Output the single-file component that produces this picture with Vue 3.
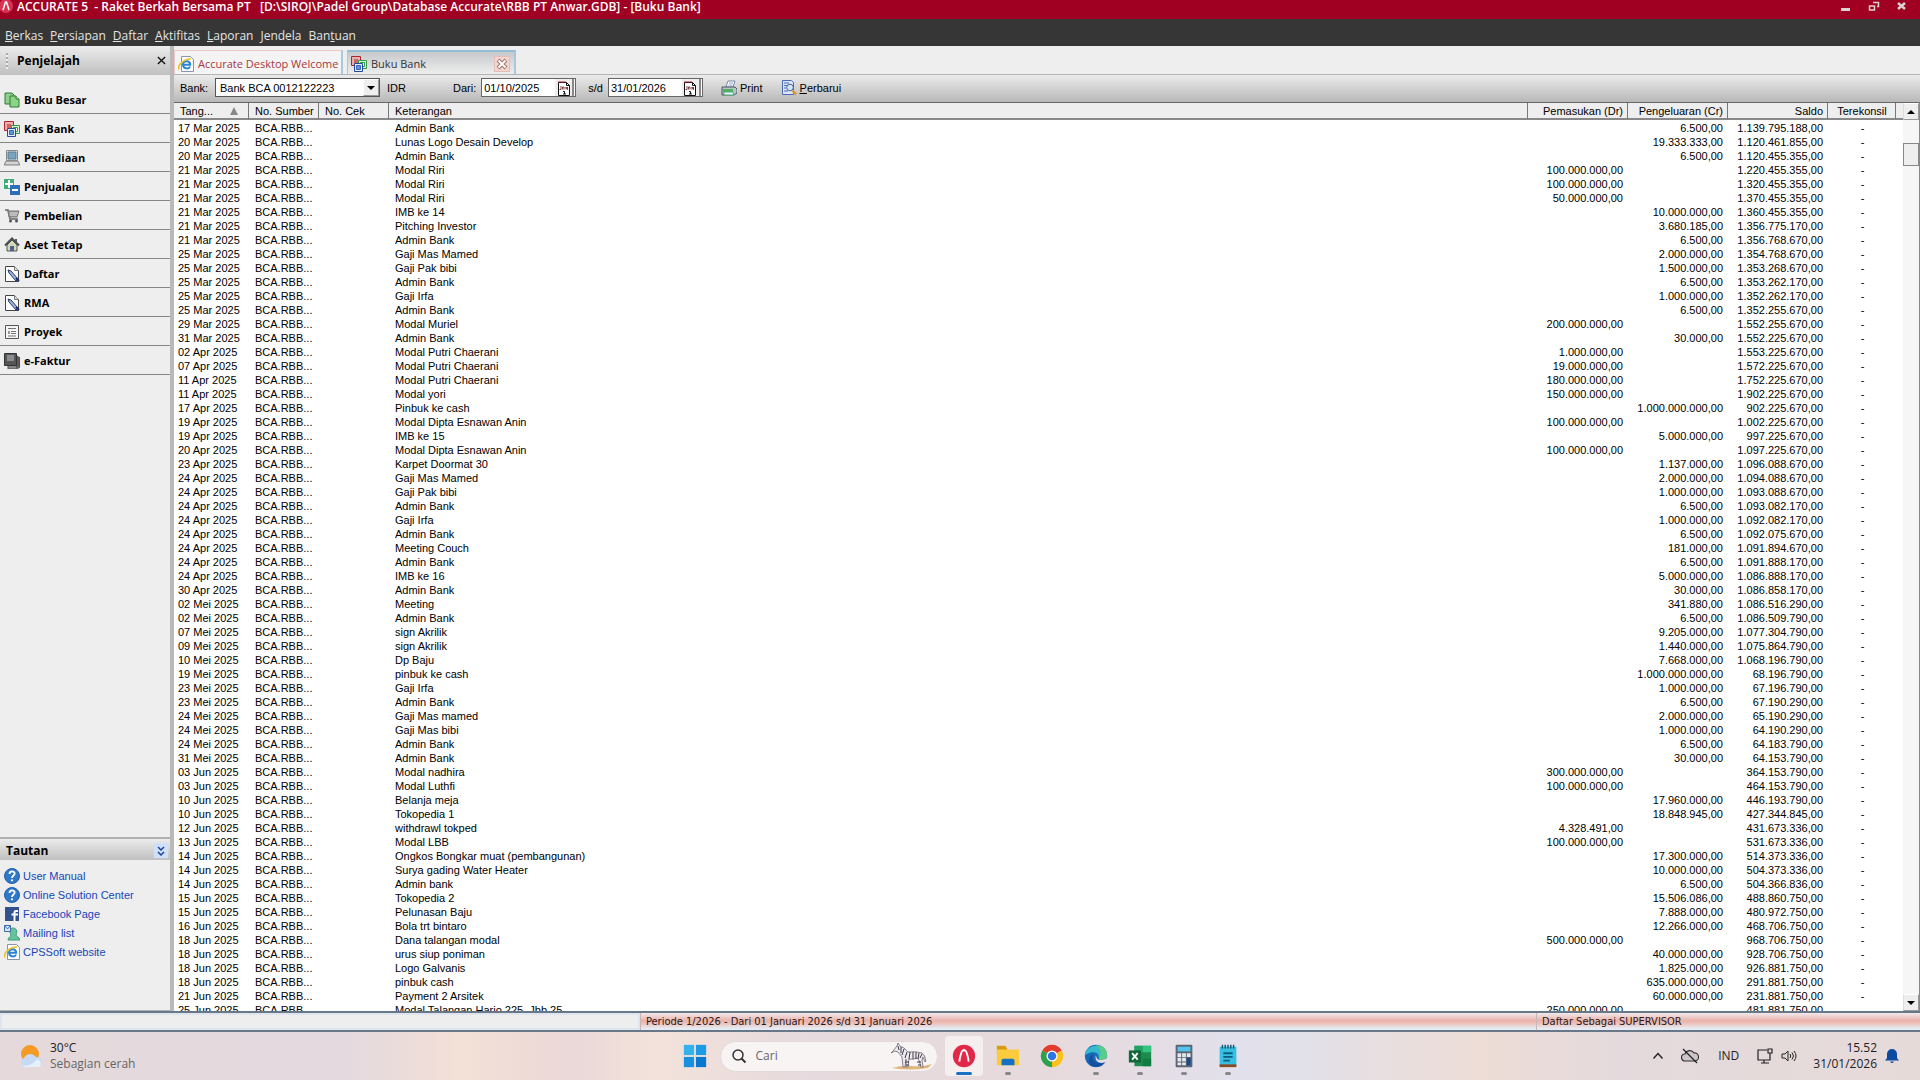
<script setup>
const menus = [
  ['', 'B', 'erkas'], ['', 'P', 'ersiapan'], ['', 'D', 'aftar'], ['', 'A', 'ktifitas'],
  ['', 'L', 'aporan'], ['', 'J', 'endela'], ['Ban', 't', 'uan'],
]

const icons = {
  copy: '<path d="M1 1h7l2 2v9H1z" fill="#8fcf8b" stroke="#2f7a35"/><path d="M6 4h6l3 3v8H6z" fill="#8bd488" stroke="#2f7a35"/><path d="M12 4v3h3" fill="#d9f2d6" stroke="#2f7a35"/>',
  bank: '<path d="M.5.5h9v9h-9z" fill="#e8b0ae" stroke="#a8292d"/><path d="M3 3h4v4H3z" fill="#c96666"/><path d="M7.500 4.500h8v8h-8z" fill="#d9f2d9" stroke="#2f9a44"/><path d="M9.500 6.500h4v4h-4z" fill="#fff" stroke="#2f9a44"/><path d="M3.500 7.500h8v8h-8z" fill="#e3efff" stroke="#27489a"/><path d="M5.500 9.500h4v4h-4z" fill="#5d95df" stroke="#3767b5"/>',
  computer: '<path d="M2.500.5h11v10h-11z" fill="#e4e6e8" stroke="#888"/><path d="M4 2h8v7H4z" fill="#7ba3bd" stroke="#557c94"/><path d="M2 11h12l2 4H0z" fill="#b9bcbf" stroke="#888"/><path d="M2 13h12" stroke="#eee"/>',
  plusminus: '<path d="M0 0h10v10H0z" fill="#3fae74"/><path d="M5 1v8M1 5h8" stroke="#fff" stroke-width="2"/><path d="M6 6h10v10H6z" fill="#2f6fba"/><path d="M8 11h6" stroke="#fff" stroke-width="2"/>',
  cart: '<path d="M1 2h3l2 9h8" fill="none" stroke="#666" stroke-width="1.500"/><path d="M4 3h11l-2 6H5z" fill="#9a9a9a" stroke="#777"/><path d="M6 5h8M6 7h7" stroke="#ddd"/><circle cx="6.500" cy="13" r="1.500" fill="#555"/><circle cx="12.500" cy="13" r="1.500" fill="#555"/>',
  house: '<path d="M3 8v6h10V8L8 3z" fill="#d3d8b8" stroke="#555"/><path d="M1 8.500 8 1.500l7 7" fill="none" stroke="#4a4f55" stroke-width="2"/><path d="M12 2v3" stroke="#555" stroke-width="2"/><path d="M6 9h4v5H6z" fill="#4d6487"/>',
  note: '<path d="M1.500.5h9l4 4v11h-13z" fill="#fff" stroke="#444"/><path d="M10.500.5v4h4" fill="#ddd" stroke="#777"/><path d="m4 4 3 1 7 8-2 2-7-8z" fill="#9cb1d8" stroke="#27386e"/><path d="m12 12 3 3" stroke="#1e2f68" stroke-width="2"/>',
  project: '<path d="M1.500 1.500h13v13h-13z" fill="#f5f5f5" stroke="#555"/><path d="M4 4.500h8M7 7.500h5M7 9.500h5M4 12h8" stroke="#777"/><path d="M4 7h2v3H4z" fill="#999"/>',
  device: '<path d="M4 3h9l3 2v9l-3 2H4z" fill="#888" stroke="#555"/><path d="M.5.500h12v12H.5z" fill="#555" stroke="#333"/><path d="M3 2h7v6H3z" fill="#8a8e92"/><path d="M13 3v12M15 4v10" stroke="#333"/>',
  help: '<circle cx="8" cy="8" r="7.500" fill="#2f78c8" stroke="#2260a8"/><path d="M5.500 6c0-3.500 5.200-3.200 5.200-.4C10.700 7.500 8 7.500 8 10" fill="none" stroke="#fff" stroke-width="1.800"/><circle cx="8" cy="12.300" r="1.100" fill="#fff"/>',
  facebook: '<path d="M1 1h14v14H1z" fill="#34518f"/><path d="M14 5h-2q-1.500 0-1.500 1.500V15M7.500 8.500H14" fill="none" stroke="#fff" stroke-width="2"/>',
  mailing: '<path d="M4 15c0-3 3-3 3-5-2-4-1-7 2-7s5 3 3 7c0 2 4 2 4 5z" fill="#67c39c" stroke="#3c9a78"/><path d="M.5.500h6v6h-6z" fill="#dbe8fb" stroke="#3d6aa8"/><path d="m1 1 2.500 3L6 1" fill="none" stroke="#3d6aa8"/>',
  ie: '<path d="M3.500.5h9l3 3v12h-12z" fill="#fff" stroke="#8a94a8"/><path d="M12 10.500c-1 3-7 2.500-7-2s7-4.500 7.200.3H5.500" fill="none" stroke="#2a84d6" stroke-width="2"/><path d="M1 13.500C-1 9 6 2.500 13 3" fill="none" stroke="#e8c22c" stroke-width="1.500"/>',
  print: '<path d="M5 7 7 1h7l-2 6z" fill="#fff" stroke="#7a8aa5"/><path d="M8 3h4M7.500 5h4" stroke="#8aa6d8"/><path d="M1 7h13l2 2v4l-3 2H1z" fill="#b9c3c9" stroke="#4b5a66"/><path d="M2 9h10v3H2z" fill="#51b05a"/><path d="M3 12h9l1 3H3z" fill="#e8f4ff" stroke="#5a7"/>',
  refresh: '<path d="M1.500.5h9l2 2v12h-11z" fill="#dbe6fa" stroke="#4a6bb5"/><path d="M3 3h5M3 5.500h3M3 8h2M3 11h4" stroke="#4a6bb5"/><circle cx="9" cy="7.500" r="3.300" fill="#cfe6fb" stroke="#51658e"/><path d="m11.500 10.500 3.500 4" stroke="#d9962c" stroke-width="2.500"/>',
  calendar: '<path d="M2.500 15.500v-13h8l3 3v10z" fill="#fff" stroke="#111"/><path d="M2 2h8" stroke="#a02030"/><path d="M10.500 2.500v3h3" fill="none" stroke="#111"/><path d="M5 6v3.500H3.500M6.500 9.500V7h1.500v2.500M10 9.500V7l1.500 2.500V7" fill="none" stroke="#611" stroke-width=".8"/><path d="M7 11.500h1.500V14M7 14h3" fill="none" stroke="#111"/>',
}

const nav = [
  ['copy', 'Buku Besar'], ['bank', 'Kas Bank'], ['computer', 'Persediaan'], ['plusminus', 'Penjualan'],
  ['cart', 'Pembelian'], ['house', 'Aset Tetap'], ['note', 'Daftar'], ['note', 'RMA'],
  ['project', 'Proyek'], ['device', 'e-Faktur'],
]

const links = [
  ['help', 'User Manual'], ['help', 'Online Solution Center'], ['facebook', 'Facebook Page'],
  ['mailing', 'Mailing list'], ['ie', 'CPSSoft website'],
]

// tanggal | keterangan | pemasukan | pengeluaran | saldo
const rows = `17 Mar|Admin Bank||6.500|1.139.795.188
20 Mar|Lunas Logo Desain Develop||19.333.333|1.120.461.855
20 Mar|Admin Bank||6.500|1.120.455.355
21 Mar|Modal Riri|100.000.000||1.220.455.355
21 Mar|Modal Riri|100.000.000||1.320.455.355
21 Mar|Modal Riri|50.000.000||1.370.455.355
21 Mar|IMB ke 14||10.000.000|1.360.455.355
21 Mar|Pitching Investor||3.680.185|1.356.775.170
21 Mar|Admin Bank||6.500|1.356.768.670
25 Mar|Gaji Mas Mamed||2.000.000|1.354.768.670
25 Mar|Gaji Pak bibi||1.500.000|1.353.268.670
25 Mar|Admin Bank||6.500|1.353.262.170
25 Mar|Gaji Irfa||1.000.000|1.352.262.170
25 Mar|Admin Bank||6.500|1.352.255.670
29 Mar|Modal Muriel|200.000.000||1.552.255.670
31 Mar|Admin Bank||30.000|1.552.225.670
02 Apr|Modal Putri Chaerani|1.000.000||1.553.225.670
07 Apr|Modal Putri Chaerani|19.000.000||1.572.225.670
11 Apr|Modal Putri Chaerani|180.000.000||1.752.225.670
11 Apr|Modal yori|150.000.000||1.902.225.670
17 Apr|Pinbuk ke cash||1.000.000.000|902.225.670
19 Apr|Modal Dipta Esnawan Anin|100.000.000||1.002.225.670
19 Apr|IMB ke 15||5.000.000|997.225.670
20 Apr|Modal Dipta Esnawan Anin|100.000.000||1.097.225.670
23 Apr|Karpet Doormat 30||1.137.000|1.096.088.670
24 Apr|Gaji Mas Mamed||2.000.000|1.094.088.670
24 Apr|Gaji Pak bibi||1.000.000|1.093.088.670
24 Apr|Admin Bank||6.500|1.093.082.170
24 Apr|Gaji Irfa||1.000.000|1.092.082.170
24 Apr|Admin Bank||6.500|1.092.075.670
24 Apr|Meeting Couch||181.000|1.091.894.670
24 Apr|Admin Bank||6.500|1.091.888.170
24 Apr|IMB ke 16||5.000.000|1.086.888.170
30 Apr|Admin Bank||30.000|1.086.858.170
02 Mei|Meeting||341.880|1.086.516.290
02 Mei|Admin Bank||6.500|1.086.509.790
07 Mei|sign Akrilik||9.205.000|1.077.304.790
09 Mei|sign Akrilik||1.440.000|1.075.864.790
10 Mei|Dp Baju||7.668.000|1.068.196.790
19 Mei|pinbuk ke cash||1.000.000.000|68.196.790
23 Mei|Gaji Irfa||1.000.000|67.196.790
23 Mei|Admin Bank||6.500|67.190.290
24 Mei|Gaji Mas mamed||2.000.000|65.190.290
24 Mei|Gaji Mas bibi||1.000.000|64.190.290
24 Mei|Admin Bank||6.500|64.183.790
31 Mei|Admin Bank||30.000|64.153.790
03 Jun|Modal nadhira|300.000.000||364.153.790
03 Jun|Modal Luthfi|100.000.000||464.153.790
10 Jun|Belanja meja||17.960.000|446.193.790
10 Jun|Tokopedia 1||18.848.945|427.344.845
12 Jun|withdrawl tokped|4.328.491||431.673.336
13 Jun|Modal LBB|100.000.000||531.673.336
14 Jun|Ongkos Bongkar muat (pembangunan)||17.300.000|514.373.336
14 Jun|Surya gading Water Heater||10.000.000|504.373.336
14 Jun|Admin bank||6.500|504.366.836
15 Jun|Tokopedia 2||15.506.086|488.860.750
15 Jun|Pelunasan Baju||7.888.000|480.972.750
16 Jun|Bola trt bintaro||12.266.000|468.706.750
18 Jun|Dana talangan modal|500.000.000||968.706.750
18 Jun|urus siup poniman||40.000.000|928.706.750
18 Jun|Logo Galvanis||1.825.000|926.881.750
18 Jun|pinbuk cash||635.000.000|291.881.750
21 Jun|Payment 2 Arsitek||60.000.000|231.881.750
25 Jun|Modal Talangan Hario 225, Jbb 25|250.000.000||481.881.750`
  .split('\n')
  .map((line) => line.split('|'))

const money = (value) => (value ? value + ',00' : '')

const apps = [
  { name: 'Accurate', active: true, art: '<circle cx="14" cy="14" r="12" fill="#e22849"/><path d="M9 20c.5-5 2.500-12 4-12h2c1.500 0 3.500 7 4 12" fill="none" stroke="#fff" stroke-width="2"/><path d="m12 9 2-3 2 3z" fill="#fff"/>' },
  { name: 'File Explorer', open: true, art: '<path d="M2 3h9l2 3v4H2z" fill="#d99a12"/><path d="M2 7h24v17H2z" fill="#fbcb3e"/><path d="M7 24v-5q0-2 2-2h10q2 0 2 2v5z" fill="#1470c4"/>' },
  { name: 'Chrome', art: '<path d="M14 14 3.600 8A12 12 0 0 1 24.400 8z" fill="#e33b2e"/><path d="M14 14V2 14L24.400 8A12 12 0 0 1 14 26z" fill="#fbc116"/><path d="M14 14v12A12 12 0 0 1 3.600 8z" fill="#2ca24c"/><circle cx="14" cy="14" r="6" fill="#fff"/><circle cx="14" cy="14" r="4.600" fill="#2f74e4"/>' },
  { name: 'Edge', open: true, art: '<circle cx="14" cy="14" r="12" fill="#1769b8"/><path d="M2 14C3-1 26-1 26 13c0 6-9 7-9 3 0-3-1-6-6-6-4 0-8 2-9 4z" fill="#35b9cf"/><path d="M14 2.500c8 0 12 5 12 10.500 0 6-9 7-9 3 4-3 2-10-3-13.500z" fill="#5bcb85"/><path d="M11 12c-3 6 3 12 12 9-4 6-13 6-16 1-2-4 0-8 4-10z" fill="#174f9c"/><path d="M14 13c0 5 4 7 11 4l1-2v5l-3 1c-7 2-11-3-9-8z" fill="#eadde2"/>' },
  { name: 'Excel', open: true, art: '<path d="M8 3h18v22H8z" fill="#1e8a4e"/><path d="M8 3h9v7H8z" fill="#21a366"/><path d="M17 3h9v7h-9z" fill="#33c481"/><path d="M17 17h9v8h-9z" fill="#107c41"/><path d="M2 8h13v13H2z" fill="#106837"/><path d="m5.500 11 6 7M11.500 11l-6 7" stroke="#fff" stroke-width="2"/>' },
  { name: 'Kalkulator', open: true, art: '<rect x="5" y="2" width="18" height="24" rx="1" fill="#5b6573"/><path d="M7 4h14v5H7z" fill="#52c4ee"/><path d="M7 11h4v4H7zm5 0h4v4h-4zm5 0h4v4h-4zM7 16h4v4H7zm5 0h4v4h-4zM7 21h4v3H7zm5 0h4v3h-4z" fill="#e6e9ee"/><path d="M17 16h4v8h-4z" fill="#174a8c"/>' },
  { name: 'Notepad', open: true, art: '<path d="M5 4h18v21H5z" fill="#35bfe0"/><path d="M5 23h18v3H5z" fill="#8a4a22"/><path d="M8 2v4m3-4v4m3-4v4m3-4v4m3-4v4" stroke="#144f70" stroke-width="1.500"/><path d="M9 11h10M9 15h10M9 19h7" stroke="#0e5c80" stroke-width="2"/>' },
]
</script>

<template>
  <div class="desktop">
    <header class="titlebar">
      <svg class="ico" viewBox="0 0 16 16"><circle cx="6" cy="7" r="7" fill="#d93354" /><path d="m3 11 2.500-8h1L9 11" fill="none" stroke="#fff" stroke-width="1.500" /></svg>
      <h1>ACCURATE 5&nbsp; - Raket Berkah Bersama PT&nbsp;&nbsp; [D:\SIROJ\Padel Group\Database Accurate\RBB PT Anwar.GDB] - [Buku Bank]</h1>
      <div class="window-buttons">
        <button aria-label="Minimize"><svg viewBox="0 0 12 12"><path d="M1 7h9v3H1z" fill="#d9d3cf" /></svg></button>
        <button aria-label="Restore"><svg viewBox="0 0 12 12"><path d="M5 1.500h5.500v4H9M1.500 5h5v4h-5z" fill="none" stroke="#d9d3cf" stroke-width="1.500" /></svg></button>
        <button aria-label="Close"><svg viewBox="0 0 12 12"><path d="m2 2 7 6M9 2 2 8" stroke="#d9d3cf" stroke-width="2.500" /></svg></button>
      </div>
    </header>

    <nav class="menubar">
      <a v-for="m in menus" :key="m[2]" href="#">{{ m[0] }}<u>{{ m[1] }}</u>{{ m[2] }}</a>
    </nav>

    <div class="body">
      <aside class="sidebar">
        <div class="panel-head explorer">
          <span class="grip"></span>
          <h2>Penjelajah</h2>
          <button aria-label="Tutup panel"><svg viewBox="0 0 10 10"><path d="m1 1 8 8M9 1 1 9" stroke="#111" stroke-width="1.500" /></svg></button>
        </div>
        <ul class="modules">
          <li v-for="item in nav" :key="item[1]">
            <a href="#"><svg class="ico" viewBox="0 0 16 16" v-html="icons[item[0]]"></svg>{{ item[1] }}</a>
          </li>
        </ul>
        <div class="panel-head links-head">
          <h2>Tautan</h2>
          <button class="collapse" aria-label="Ciutkan"><svg viewBox="0 0 14 14"><path d="m4 3 3 3 3-3M4 8l3 3 3-3" fill="none" stroke="#1c3f94" stroke-width="1.500" /></svg></button>
        </div>
        <ul class="links">
          <li v-for="link in links" :key="link[1]">
            <a href="#"><svg class="ico" viewBox="0 0 16 16" v-html="icons[link[0]]"></svg>{{ link[1] }}</a>
          </li>
        </ul>
      </aside>

      <main class="workspace">
        <div class="tabs">
          <button class="tab"><svg class="ico" viewBox="0 0 16 16" v-html="icons.ie"></svg>Accurate Desktop Welcome</button>
          <div class="tab current">
            <svg class="ico" viewBox="0 0 16 16" v-html="icons.bank"></svg><span>Buku Bank</span>
            <button class="tab-close" aria-label="Tutup tab"><svg viewBox="0 0 12 12"><path d="m2 2 8 8M10 2l-8 8" stroke="#a3736c" stroke-width="4" /><path d="m2.500 2.500 7 7M9.500 2.500l-7 7" stroke="#fff" stroke-width="2" /></svg></button>
          </div>
        </div>

        <div class="toolbar">
          <label for="bank">Bank:</label>
          <div class="combo">
            <select id="bank"><option>Bank BCA 0012122223</option></select>
            <span class="drop"></span>
          </div>
          <span class="currency">IDR</span>
          <label for="from">Dari:</label>
          <div class="date">
            <input id="from" type="text" value="01/10/2025" />
            <button aria-label="Kalender"><svg class="ico" viewBox="0 0 16 16" v-html="icons.calendar"></svg></button>
          </div>
          <label for="to" class="until">s/d</label>
          <div class="date">
            <input id="to" type="text" value="31/01/2026" />
            <button aria-label="Kalender"><svg class="ico" viewBox="0 0 16 16" v-html="icons.calendar"></svg></button>
          </div>
          <button class="tool"><svg class="ico" viewBox="0 0 16 16" v-html="icons.print"></svg>Print</button>
          <button class="tool"><svg class="ico" viewBox="0 0 16 16" v-html="icons.refresh"></svg><span><u>P</u>erbarui</span></button>
        </div>

        <div class="grid">
          <div class="viewport">
            <table>
              <colgroup>
                <col class="c-date" /><col class="c-code" /><col class="c-code" /><col />
                <col class="c-num" /><col class="c-num" /><col class="c-num" /><col class="c-rec" /><col class="c-end" />
              </colgroup>
              <thead>
                <tr>
                  <th><div class="sorted">Tang...<svg viewBox="0 0 8 8"><path d="M4 0 8 8H0z" fill="#888" /></svg></div></th>
                  <th>No. Sumber</th>
                  <th>No. Cek</th>
                  <th>Keterangan</th>
                  <th class="num">Pemasukan (Dr)</th>
                  <th class="num">Pengeluaran (Cr)</th>
                  <th class="num">Saldo</th>
                  <th class="mid">Terekonsil</th>
                  <th></th>
                </tr>
              </thead>
              <tbody>
                <tr v-for="(r, i) in rows" :key="i">
                  <td class="day">{{ r[0] }} 2025</td>
                  <td>BCA.RBB...</td>
                  <td></td>
                  <td>{{ r[1] }}</td>
                  <td class="num">{{ money(r[2]) }}</td>
                  <td class="num">{{ money(r[3]) }}</td>
                  <td class="num">{{ money(r[4]) }}</td>
                  <td class="mid">-</td>
                  <td></td>
                </tr>
              </tbody>
            </table>
          </div>
          <div class="scrollbar">
            <button aria-label="Gulir ke atas"><svg viewBox="0 0 8 4"><path d="M4 0 8 4H0z" /></svg></button>
            <div class="track"><div class="thumb"></div></div>
            <button aria-label="Gulir ke bawah"><svg viewBox="0 0 8 4"><path d="M0 0h8L4 4z" /></svg></button>
          </div>
        </div>
      </main>
    </div>

    <footer class="status">
      <div class="blank"></div>
      <div class="pink period">Periode 1/2026 - Dari 01 Januari 2026 s/d 31 Januari 2026</div>
      <div class="pink user">Daftar Sebagai SUPERVISOR</div>
    </footer>

    <div class="taskbar">
      <div class="weather">
        <svg viewBox="0 0 26 26"><circle cx="12" cy="11" r="9" fill="#f59a23" /><path d="M6 24a5 5 0 0 1 0-9 7 7 0 0 1 12-1 5 5 0 0 1 2 10z" fill="#c6daf6" /><path d="M4 22c5 2 12-1 15-6 5 1 5 8 1 8H6z" fill="#e6effc" /></svg>
        <div><p>30°C</p><p class="dim">Sebagian cerah</p></div>
      </div>
      <div class="center">
        <button class="app" aria-label="Start"><svg viewBox="0 0 28 28"><path d="M2 2h11v11H2z" fill="#33b2ee" /><path d="M15 2h11v11H15z" fill="#1c9ce6" /><path d="M2 15h11v11H2z" fill="#1790e0" /><path d="M15 15h11v11H15z" fill="#0877d0" /></svg></button>
        <div class="search">
          <svg class="lens" viewBox="0 0 16 16"><circle cx="7" cy="7" r="5" fill="none" stroke="#333" stroke-width="1.500" /><path d="m10.500 10.500 4 4" stroke="#333" stroke-width="2" /></svg>
          <input type="text" placeholder="Cari" aria-label="Cari" />
          <svg class="zebra" viewBox="0 0 42 28">
            <path d="M2 26q10-3 20-2t20-2l-4 4q-18 3-36 0z" fill="#dfb77d" />
            <path d="M3 9 7 4l1-3 2 3 4 2 4 4q8-1 14 1 3 2 4 8l-1 1-2-5-1 3 1 7h-2l-2-7-2-2q-4 2-8 1l-1 8h-2v-8l-1 8h-2l-1-10-4-5-3-1-4 2z" fill="#eceaf0" stroke="#6b6772" stroke-width=".8" />
            <path d="m8 4 1 4M11 5v6M14 7l-2 6M17 10l-2 6M20 10l-1 7M23 10v7M26 10v7M29 11l-1 6M32 12l-2 4M15 20h4M27 20h4M16 23h3M28 23h3" stroke="#3c3943" />
          </svg>
        </div>
        <button v-for="app in apps" :key="app.name" class="app" :class="{ active: app.active, open: app.open }" :aria-label="app.name">
          <svg viewBox="0 0 28 28" v-html="app.art"></svg>
        </button>
      </div>
      <div class="tray">
        <svg viewBox="0 0 16 16"><path d="m3.500 10.500 4.500-5 4.500 5" fill="none" stroke="#222" stroke-width="1.400" /></svg>
        <svg class="cloud" viewBox="0 0 18 16"><path d="M4 13a3.500 3.500 0 0 1 0-7 5 5 0 0 1 9-1 4 4 0 0 1 1 8z" fill="#ccc6ca" stroke="#333" stroke-width="1.200" /><path d="m2 1 14 14" stroke="#222" stroke-width="1.300" /></svg>
        <span class="lang">IND</span>
        <svg class="net" viewBox="0 0 16 16"><path d="M10 2H1v10h12V8M7 12v3M4 15h8M11 1h4v4h-4zM13 5v3" fill="none" stroke="#222" stroke-width="1.200" /></svg>
        <svg class="sound" viewBox="0 0 16 16"><path d="M1 6h3l3-3v10l-3-3H1zM9 6q1.500 2 0 4M11 4.500q3 3.500 0 7M13 3q4 5 0 10" fill="none" stroke="#222" /></svg>
        <div class="clock"><p>15.52</p><p>31/01/2026</p></div>
        <svg class="bell" viewBox="0 0 16 16"><path d="M1 12.500 3 10V6a5 5 0 0 1 10 0v4l2 2.500zM6 13.500h4q-2 3-4 0z" fill="#0b4aa0" /></svg>
      </div>
    </div>
  </div>
</template>

<style>
html, body { margin: 0; }
</style>

<style scoped>
.desktop {
  --ui: "Open Sans", "Noto Sans", sans-serif;
  --small: "Liberation Sans", Arial, sans-serif;
  height: 100vh;
  display: flex;
  flex-direction: column;
  overflow: hidden;
  background: #eee;
  font: 11px/14px var(--small);
  color: #000;
}
.desktop * { box-sizing: border-box; }
button { border: 0; padding: 0; background: none; font: inherit; color: inherit; display: flex; align-items: center; justify-content: center; }
a { color: inherit; text-decoration: none; }
h1, h2, p, ul { margin: 0; padding: 0; list-style: none; }
svg { display: block; flex: none; }
.ico { width: 16px; height: 16px; }

.titlebar { height: 19px; flex: none; display: flex; align-items: center; padding: 0 12px 5px 0; background: #a00022; color: #fff; }
.titlebar .ico { margin-right: 1px; }
.titlebar h1 { flex: 1; font: 600 12px/14px var(--ui); white-space: nowrap; }
.window-buttons { display: flex; gap: 16px; }
.window-buttons svg { width: 12px; height: 12px; }

.menubar { height: 27px; flex: none; display: flex; align-items: center; gap: 7px; padding: 6px 0 0 5px; background: #363636; color: #e4e4e4; font: 12px/16px var(--ui); }

.body { flex: 1; min-height: 0; display: flex; }
.sidebar { width: 174px; flex: none; display: flex; flex-direction: column; border-right: 4px solid #b9b9b9; background: #eee; }
.panel-head { display: flex; align-items: center; background: linear-gradient(#ececec, #c0c0c0); }
.panel-head h2 { flex: 1; font: bold 12px/16px var(--ui); }
.explorer { height: 29px; padding: 0 4px 0 6px; }
.explorer svg { width: 9px; height: 9px; }
.grip { width: 2px; height: 16px; margin-right: 9px; background: repeating-linear-gradient(#aaa 0 2px, #eee 2px 4px); }
.modules { flex: 1; padding-top: 10px; }
.modules a { height: 29px; display: flex; align-items: center; gap: 4px; padding: 2px 0 0 4px; border-bottom: 1px solid #858585; font: bold 11px/16px var(--ui); }
.links-head { height: 23px; padding: 2px 2px 0 6px; border-top: 2px solid #b0b0b0; }
.collapse { width: 14px; height: 15px; background: #cfe0fa; }
.collapse svg { width: 14px; height: 14px; }
.links { height: 151px; padding-top: 6px; border-bottom: 1px solid #b0b0b0; color: #1746b8; }
.links a { height: 19px; display: flex; align-items: center; gap: 3px; padding-left: 4px; }

.workspace { flex: 1; min-width: 0; display: flex; flex-direction: column; }
.tabs { height: 29px; flex: none; display: flex; align-items: flex-end; gap: 4px; border-bottom: 1px solid #b4b4b4; background: #eee; }
.tab { width: 169px; height: 24px; display: flex; align-items: center; justify-content: flex-start; gap: 4px; padding: 2px 4px 0 3px; border: 1px solid #efc6c3; border-right: 2px solid #a5cbe0; border-bottom: 0; background: #f4f4f4; color: #a5393f; font: 11px/16px var(--ui); white-space: nowrap; }
.tab.current { border: 1px solid #a5c8dc; border-top: 2px solid #93bed6; border-right-width: 2px; border-bottom: 0; background: linear-gradient(#c6c8ca, #eee); color: #333; }
.tab.current span { flex: 1; }
.tab-close { width: 16px; height: 16px; border: 1px solid #e3bdb6; background: #f3d6d0; }
.tab-close svg { width: 12px; height: 12px; }

.toolbar { height: 27px; flex: none; display: flex; align-items: center; padding: 0 0 2px 6px; background: linear-gradient(#ebebeb, #b8b8b8); }
.toolbar > label { margin-right: 5px; }
.combo { position: relative; width: 165px; height: 19px; margin: 0 7px; }
.toolbar > label:first-child { margin: 0; width: 28px; }
select { appearance: none; width: 100%; height: 19px; padding: 0 4px; border: 1px solid #555; border-radius: 0; background: #fff; color: #000; font: 11px/14px var(--small); }
.drop { position: absolute; top: 1px; right: 1px; width: 16px; height: 17px; background: #eee; border: 1px solid #999; border-top-color: #fff; border-left-color: #fff; pointer-events: none; }
.drop::after { content: ""; position: absolute; left: 3px; top: 6px; border: 4px solid transparent; border-top-color: #000; border-bottom: 0; }
.currency { width: 66px; }
.date { display: flex; width: 95px; height: 19px; padding: 0 1px; border: 1px solid #666; background: #fff; }
.date input { flex: 1; min-width: 0; padding: 0 0 0 1px; border: 0; background: none; font: 11px/14px var(--small); color: #000; }
.date button { width: 19px; border-right: 2px solid #888; background: #eee; }
.until { margin-left: 12px; }
.tool { gap: 3px; margin-left: 18px; }

.grid { flex: 1; min-height: 0; display: flex; border-top: 1px solid #666; border-right: 1px solid #888; background: #fff; }
.viewport { flex: 1; min-width: 0; overflow: hidden; }
table { width: 100%; table-layout: fixed; border-collapse: separate; border-spacing: 0; }
.c-date { width: 75px; }
.c-code { width: 70px; }
.c-num { width: 100px; }
.c-rec { width: 68px; }
.c-end { width: 7px; }
th { height: 17px; padding: 0 5px 0 6px; border-right: 1px solid #777; border-bottom: 2px solid #888; background: #eee; font-weight: normal; text-align: left; white-space: nowrap; }
th:last-child, td:last-child { padding: 0; border-right: 0; }
thead::after { content: ""; display: block; height: 1px; }
td { height: 14px; padding: 0 5px 0 6px; line-height: 14px; white-space: nowrap; }
.day { padding: 0 0 0 4px; }
th.num { padding-right: 4px; }
.num { text-align: right; }
.mid { text-align: center; }
.sorted { display: flex; align-items: center; justify-content: space-between; padding-right: 5px; }
.sorted svg { width: 8px; height: 8px; }
.scrollbar { width: 16px; flex: none; display: flex; flex-direction: column; background: #f6f6f6; }
.scrollbar button { height: 17px; border: 1px solid #999; border-top-color: #fff; border-left-color: #ddd; background: #eee; }
.scrollbar button svg { width: 8px; height: 4px; }
.track { flex: 1; padding-top: 23px; }
.thumb { height: 23px; border: 1px solid #888; background: #eee; }

.status { height: 21px; flex: none; display: flex; border-top: 2px solid #687888; border-bottom: 2px solid #687888; background: #eee; color: #2a1818; font: 11px/17px "DejaVu Sans Condensed", "Open Sans", sans-serif; }
.blank { width: 33.33%; border: 2px solid #dfe5ee; }
.pink { padding: 0 5px; border-left: 1px solid #c8b8b8; background: linear-gradient(#f2eaec, #eab2ab 45%, #ecc0ba 60%, #e6eaf2 90%); }
.period { flex: 1; }
.user { width: 20%; }

.taskbar { height: 48px; flex: none; display: grid; grid-template-columns: 1fr auto 1fr; align-items: center; background: linear-gradient(90deg, #e5d9db 0, #e4d9df 18%, #f3e0d6 24%, #ead8d8 30%, #f3e2da 34%, #e6dade 42%, #e7dadc 55%, #e2e0ec 64%, #e2e0e8 68%, #eeddd6 77%, #e4d9dc 84%, #e6dad9 100%); color: #222; font: 12px/16px var(--ui); }
.weather { display: flex; align-items: center; gap: 6px; padding-left: 18px; }
.weather svg { width: 26px; height: 26px; }
.dim { color: #666; }
.center { display: flex; align-items: center; gap: 6px; padding-left: 2px; }
.app { position: relative; width: 38px; height: 40px; border-radius: 4px; }
.app svg { width: 26px; height: 26px; }
.app.active { background: #f6eff0; }
.app.open::after, .app.active::after { content: ""; position: absolute; left: 16px; bottom: 1px; width: 6px; height: 3px; border-radius: 2px; background: #888; }
.app.active::after { left: 11px; width: 16px; background: #1b70c5; }
.search { width: 218px; height: 31px; display: flex; align-items: center; margin-right: 1px; padding: 0 5px 0 10px; border: 1px solid #e2dada; border-radius: 16px; background: #f8f4f4; }
.lens { width: 16px; height: 16px; }
.search input { flex: 1; min-width: 0; margin-left: 9px; padding: 0; border: 0; background: none; font: 12px/16px var(--ui); }
.search input::placeholder { color: #666; opacity: 1; }
.zebra { width: 42px; height: 28px; }
.tray { display: flex; align-items: center; justify-content: flex-end; padding-right: 20px; }
.tray svg { width: 16px; height: 16px; }
.tray .cloud { width: 18px; margin-left: 15px; }
.lang { margin-left: 19px; }
.tray .net { margin-left: 18px; }
.tray .sound { margin-left: 8px; }
.clock { margin: 0 7px 0 16px; text-align: right; }
</style>
